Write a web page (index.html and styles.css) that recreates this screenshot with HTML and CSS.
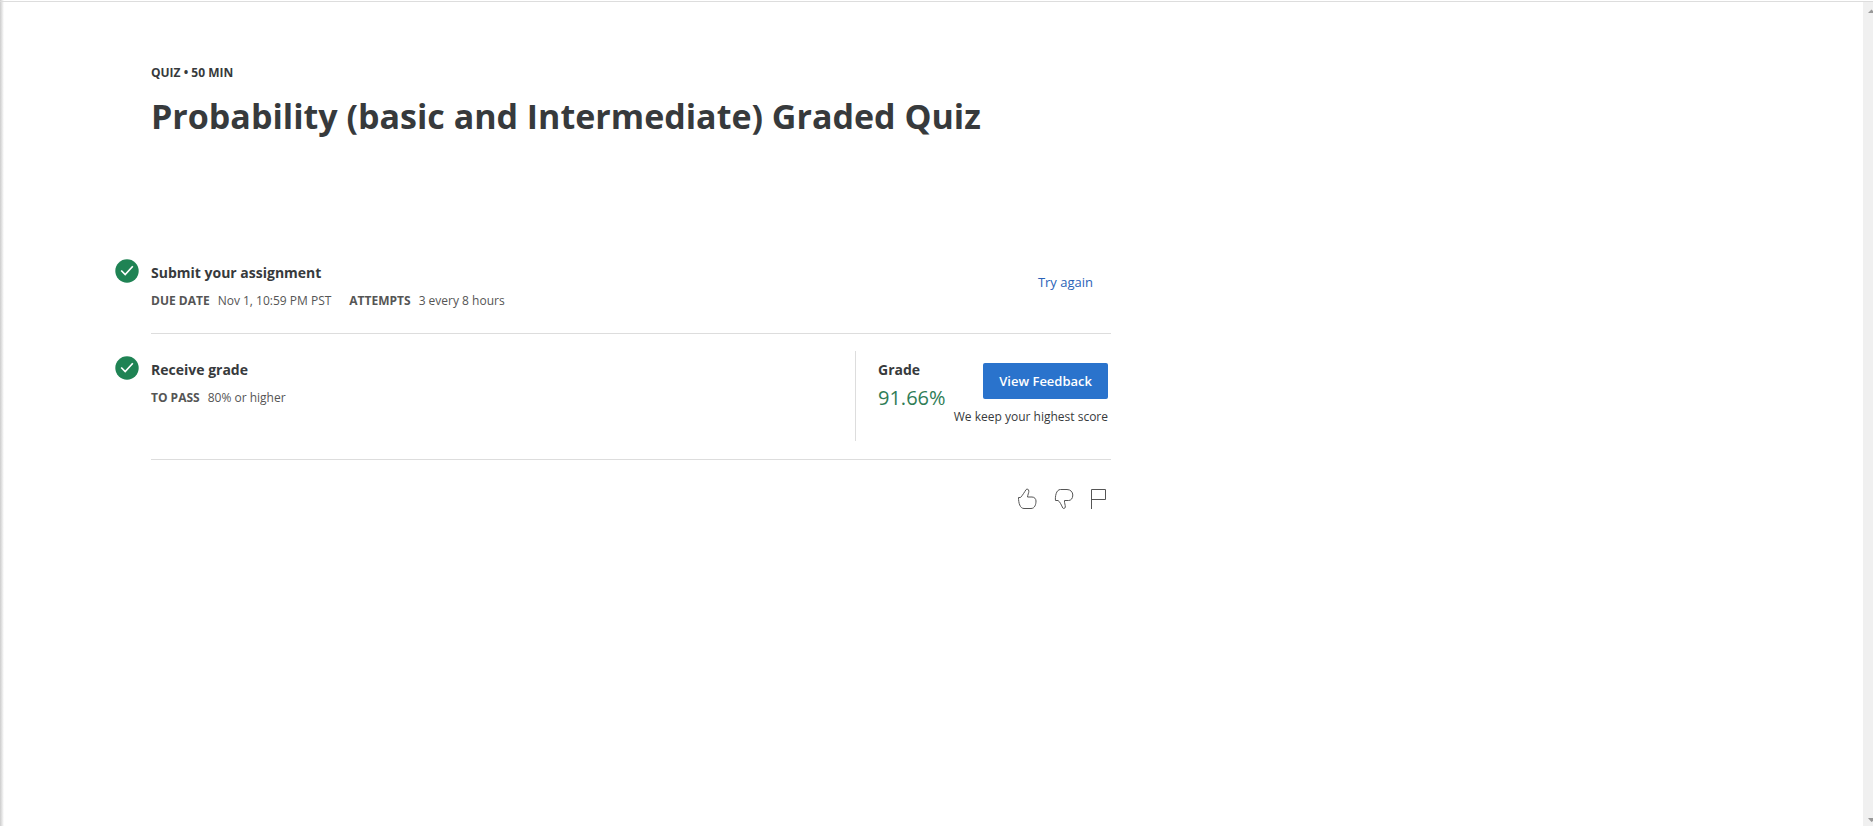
FILE: index.html
```html
<!DOCTYPE html>
<html lang="en">
<head>
<meta charset="utf-8">
<title>Probability (basic and Intermediate) Graded Quiz</title>
<link rel="stylesheet" href="styles.css">
</head>
<body>
<div class="frame">
  <main class="content">
    <header class="heading">
      <p class="eyebrow">QUIZ • 50 MIN</p>
      <h1 class="title">Probability (basic and Intermediate) Graded Quiz</h1>
    </header>

    <section class="row">
      <svg class="check" viewBox="0 0 24 24" aria-hidden="true"><circle cx="12" cy="12" r="11.7" fill="#1f8354"/><path d="M6.2 11.500l4 4.100 7.600-8.300" fill="none" stroke="#fff" stroke-width="1.700"/></svg>
      <div class="info">
        <h2 class="row-title">Submit your assignment</h2>
        <dl class="meta">
          <div class="pair"><dt>DUE DATE</dt><dd>Nov 1, 10:59 PM PST</dd></div>
          <div class="pair"><dt>ATTEMPTS</dt><dd>3 every 8 hours</dd></div>
        </dl>
      </div>
      <button class="retry" type="button">Try again</button>
    </section>

    <section class="row">
      <svg class="check" viewBox="0 0 24 24" aria-hidden="true"><circle cx="12" cy="12" r="11.7" fill="#1f8354"/><path d="M6.2 11.500l4 4.100 7.600-8.300" fill="none" stroke="#fff" stroke-width="1.700"/></svg>
      <div class="info">
        <h2 class="row-title">Receive grade</h2>
        <dl class="meta">
          <div class="pair"><dt>TO PASS</dt><dd>80% or higher</dd></div>
        </dl>
      </div>
      <div class="grade">
        <div class="score">
          <h2 class="row-title">Grade</h2>
          <p class="percent">91.66%</p>
        </div>
        <div class="feedback">
          <button class="primary" type="button">View Feedback</button>
          <p class="note">We keep your highest score</p>
        </div>
      </div>
    </section>

    <footer class="reactions">
      <button class="icon" type="button" aria-label="Like"><svg width="20" height="22" viewBox="0 0 20 22"><path d="M1.500 9.500H3.500C5.500 7.500 7.500 4 9 1.700C10 .5 12 1 11.800 3.500C11.800 5 10.800 6.500 10.500 9H15C17.500 9 19 11 19 13C19 16 18 20.500 14 20.500H7C3 20.500 1.500 15 1.500 9.500Z"/></svg></button>
      <button class="icon" type="button" aria-label="Dislike"><svg width="20" height="22" viewBox="0 0 20 22"><path d="M1.500 12.500C1 9 2 1.500 6.500 1.500H13C16.500 1.500 18.800 4 18.800 7C18.800 10.500 17 12.500 14.500 12.500H10.500C10.200 15 11.500 17 11.300 19C11 20.800 9.300 20.800 8.800 20C7.500 17.500 6 13.500 4 12.500Z"/></svg></button>
      <button class="icon" type="button" aria-label="Report"><svg width="16" height="22" viewBox="0 0 16 22"><path d="M.5 21V1.500H14.500V11.500H.5"/></svg></button>
    </footer>
  </main>
  <div class="scrollbar" aria-hidden="true">
    <svg width="10" height="18" viewBox="0 0 10 18"><path d="M5 11L8.500 7.500L10 9V11Z" fill="#999"/></svg>
    <svg width="10" height="10" viewBox="0 0 10 10"><path d="M5 2H10V5L8.500 6Z" fill="#999"/></svg>
  </div>
</div>
</body>
</html>
```
FILE: styles.css
```css
* { box-sizing: border-box; }

body {
  margin: 0;
  font-family: "Open Sans", sans-serif;
  font-size: 12px;
  color: #373a3c;
  background: #fff;
}

h1, h2, p, dl, dd { margin: 0; }

button {
  padding: 0;
  border: 0;
  background: none;
  font: inherit;
  cursor: pointer;
}

.frame {
  display: flex;
  justify-content: space-between;
  min-height: 100vh;
  background:
    linear-gradient(#ddd, #ddd) 0 1px / 100% 1px no-repeat,
    linear-gradient(90deg, #ccc, #fff) 0 0 / 4px 100% no-repeat;
}

.content {
  flex: 0 1 1111px;
  padding: 63px 0 0 151px;
}

.heading { padding-bottom: 104px; }

.eyebrow {
  font-weight: 700;
  line-height: 20px;
}

.title {
  margin-top: 9px;
  font-size: 34px;
  font-weight: 700;
  line-height: 48px;
}

.row {
  display: flex;
  position: relative;
  padding: 17px 0 18px;
  border-bottom: 1px solid #ddd;
}

.check {
  position: absolute;
  left: -36px;
  top: 15px;
  width: 24px;
  height: 24px;
}

.row + .row .check { top: 22px; }

.info { flex: 1; }

.row + .row .info { padding-top: 7px; }

.row-title {
  font-size: 14px;
  font-weight: 700;
  line-height: 24px;
}

.meta {
  display: flex;
  gap: 18px;
  margin: 6px 0 4px;
  color: #555;
  line-height: 20px;
}

.pair {
  display: flex;
  gap: 8px;
}

.meta dt { font-weight: 700; }

.retry {
  align-self: flex-start;
  margin: 11px 18px 0 0;
  color: #2a62b8;
  font-size: 13px;
  font-weight: 500;
  line-height: 20px;
}

.grade {
  display: flex;
  justify-content: space-between;
  width: 256px;
  min-height: 90px;
  padding: 7px 3px 0 22px;
  border-left: 1px solid #ddd;
}

.percent {
  color: #2f7d56;
  font-size: 20px;
  line-height: 32px;
}

.feedback {
  display: flex;
  flex-direction: column;
  align-items: flex-end;
  padding-top: 5px;
}

.primary {
  height: 36px;
  padding: 0 16px;
  border-radius: 2px;
  background: #2a73cc;
  color: #fff;
  font-size: 13px;
  font-weight: 600;
}

.note {
  margin-top: 8px;
  line-height: 20px;
  white-space: nowrap;
}

.reactions {
  display: flex;
  justify-content: flex-end;
  gap: 17px;
  padding: 28px 4px 0 0;
}

.icon svg {
  display: block;
  fill: none;
  stroke: #555;
  stroke-width: 1;
}

.scrollbar {
  display: flex;
  flex: 0 0 10px;
  flex-direction: column;
  justify-content: space-between;
  margin-top: 2px;
  background: #f0f0f0;
}
```
